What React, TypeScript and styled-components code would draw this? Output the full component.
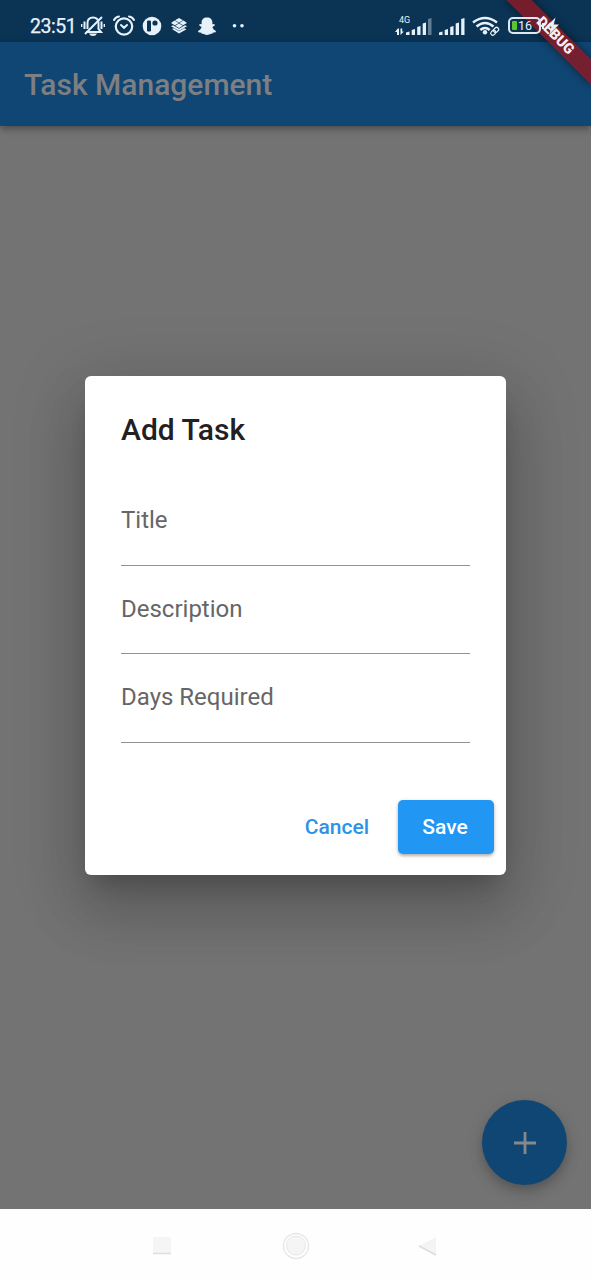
import React from 'react';
import styled, { createGlobalStyle } from 'styled-components';

const GlobalStyle = createGlobalStyle`
  * { box-sizing: border-box; }
  html, body { margin: 0; padding: 0; }
  body { font-family: Roboto, "Liberation Sans", sans-serif; overflow: hidden; }
  button, input { font-family: inherit; }
`;

const Screen = styled.div`
  position: relative;
  width: 591px;
  height: 1280px;
  display: flex;
  flex-direction: column;
  overflow: hidden;
  background: #737373;
`;

const StatusBar = styled.header`
  height: 42px;
  flex: none;
  display: flex;
  align-items: flex-start;
  padding: 11px 0 0 30px;
  background: #0b3354;
  color: #e6f1fa;
`;

const Clock = styled.time`
  width: 51px;
  font-size: 19.5px;
  line-height: 31px;
  letter-spacing: -0.45px;
  margin-right: -1px;
  white-space: nowrap;
  -webkit-text-stroke: 0.25px currentColor;
`;

const StatusIcon = styled.svg<{ $gap?: number }>`
  position: relative;
  z-index: 3;
  flex: none;
  height: 30px;
  margin-left: ${({ $gap = 0 }) => $gap}px;
  fill: #e6f1fa;
`;

const Network = styled.div`
  position: relative;
  z-index: 3;
  display: flex;
  flex: none;
  width: 38px;
  margin: 1px 0 0 148px;
`;

const NetworkType = styled.span`
  position: absolute;
  left: 4px;
  top: 4px;
  font-size: 9px;
  line-height: 9px;
`;

const Battery = styled.div`
  position: relative;
  z-index: 3;
  flex: none;
  display: flex;
  align-items: center;
  width: 33px;
  height: 17px;
  margin: 6px 0 0 8px;
  padding-left: 2px;
  border: 2px solid #dfe8ef;
  border-radius: 5px;
  font-size: 12.5px;
  line-height: 13px;
`;

const BatteryLevel = styled.span`
  width: 5px;
  height: 9px;
  margin-right: 1px;
  border-radius: 1px;
  background: #5dc52e;
`;

const AppBar = styled.div`
  height: 84px;
  flex: none;
  display: flex;
  align-items: center;
  padding: 1px 24px 0;
  background: #104673;
  box-shadow: 0 3px 6px -1px rgba(0, 0, 0, 0.2), 0 6px 7px rgba(0, 0, 0, 0.08), 0 1px 8px rgba(0, 0, 0, 0.12);
`;

const AppTitle = styled.h1`
  margin: 0;
  color: #7d7f82;
  font-size: 30px;
  line-height: 36px;
  font-weight: 500;
  letter-spacing: 0;
`;

const Content = styled.main`
  flex: 1;
  display: flex;
  flex-direction: column;
  align-items: center;
  padding-top: 250px;
`;

const Dialog = styled.section`
  width: 421px;
  height: 499px;
  flex: none;
  display: flex;
  flex-direction: column;
  padding: 36px 12px 21px 36px;
  border-radius: 6px;
  background: #fff;
  box-shadow: 0 16px 22px -10px rgba(0, 0, 0, 0.2), 0 36px 57px 4px rgba(0, 0, 0, 0.14),
    0 14px 69px 12px rgba(0, 0, 0, 0.12);
`;

const DialogTitle = styled.h2`
  margin: 0 0 29px;
  color: #212121;
  font-size: 30px;
  line-height: 36px;
  font-weight: 500;
  letter-spacing: 0;
`;

const Field = styled.label`
  display: block;
  width: 349px;
  height: 88.6px;
  padding-top: 28px;
  border-bottom: 1.5px solid #929292;
  color: #666;
  font-size: 24px;
  line-height: 30px;
`;

const Actions = styled.footer`
  display: flex;
  justify-content: flex-end;
  align-items: center;
  gap: 16px;
  margin-top: auto;
`;

const Button = styled.button<{ $raised?: boolean }>`
  height: 54px;
  width: ${({ $raised }) => ($raised ? '96px' : 'auto')};
  padding: 0 13px 0 11px;
  border: 0;
  border-radius: 5px;
  color: ${({ $raised }) => ($raised ? '#fff' : '#2b94e8')};
  background: ${({ $raised }) => ($raised ? '#2196f3' : 'transparent')};
  box-shadow: ${({ $raised }) => ($raised ? '0 2px 3px rgba(0,0,0,.24), 0 1px 5px rgba(0,0,0,.12)' : 'none')};
  font-size: 21px;
  font-weight: 500;
`;

const AddButton = styled.button`
  display: flex;
  align-items: center;
  justify-content: center;
  width: 85px;
  height: 85px;
  flex: none;
  align-self: flex-end;
  margin: auto 24px 24px 0;
  padding: 0;
  border: 0;
  border-radius: 50%;
  background: #104673;
  box-shadow: 0 5px 8px -1px rgba(0, 0, 0, 0.15), 0 9px 15px rgba(0, 0, 0, 0.09), 0 2px 20px rgba(0, 0, 0, 0.07);
`;

const SystemNav = styled.nav`
  height: 71px;
  flex: none;
  display: flex;
  align-items: center;
  justify-content: space-between;
  padding: 3px 152px 0 150px;
  background: #fefefe;
`;

const DebugBanner = styled.div`
  position: absolute;
  z-index: 2;
  left: 495px;
  top: 27px;
  width: 120px;
  height: 18px;
  transform: rotate(45deg);
  background: rgba(130, 27, 41, 0.9);
  box-shadow: 0 0 8px rgba(0, 0, 0, 0.5);
  color: #f4eef0;
  text-align: center;
  font-size: 14.5px;
  line-height: 18px;
  font-weight: 900;
`;

const MutedBell = () => (
  <StatusIcon width="26" viewBox="0 0 26 30">
    <g fill="none" stroke="#e6f1fa" strokeWidth="2">
      <path d="M7.5 18V12C7.5 8 9.5 6.5 13 6.5C17 6.5 18.5 8 18.5 12V18L21 21H6" />
      <path d="M5 23L22 6M4.5 10.5V18M21.5 10.5V18" />
      <path d="M1.7 13V16M24.3 13V16" strokeWidth="1.4" />
    </g>
    <path d="M9 22.5H17Q16 25 13 25T9 22.5Z" />
  </StatusIcon>
);

const AlarmClock = () => (
  <StatusIcon $gap={6} width="24" viewBox="0 0 24 30">
    <g fill="none" stroke="#e6f1fa" strokeLinecap="round">
      <circle cx="12" cy="15.5" r="8.2" strokeWidth="2.2" />
      <path d="M2 9Q3.5 6 7 5.5M22 9Q20.5 6 17 5.5" strokeWidth="2" />
      <path d="M9 14L12 16.8L15 14" strokeWidth="2" />
    </g>
  </StatusIcon>
);

const RoundApp = () => (
  <StatusIcon $gap={6} width="20" viewBox="0 0 20 30">
    <circle cx="10" cy="15" r="9.3" />
    <rect x="5" y="9.5" width="4" height="11" rx="1.2" fill="#0b3354" />
    <circle cx="13" cy="12" r="2.6" fill="#0b3354" />
  </StatusIcon>
);

const LayersApp = () => (
  <StatusIcon $gap={8} width="18" viewBox="0 0 18 30">
    <path d="M9 7L13 9.2L9 11.5L5 9.2ZM4.5 9.6L8.8 12L4.8 14.3L1 12ZM13.5 9.6L17 12L13 14.3L9.3 12ZM9 12.6L12.8 14.8L9 17L5.2 14.8ZM1 15.2L3 14.2L9 17.8L15 14.2L17 15.2L9 19.7ZM2 18L3.8 17.3L9 20.2L14.2 17.3L16.5 18.2L9 22.5Z" />
  </StatusIcon>
);

const GhostApp = () => (
  <StatusIcon $gap={9} width="20" viewBox="0 0 20 30">
    <path d="M10 6.5C6.4 6.5 4.6 8.6 4.6 11.5V13.3L2.6 13L2.2 14.5L4.6 16C4 18 2.8 19.1 1 20L1.4 21.3L4.2 21.8L4.8 22.8C7 22.3 8 24 10 24S13 22.3 15.2 22.8L15.8 21.8L18.6 21.3L19 20C17.2 19.1 16 18 15.4 16L17.8 14.5L17.4 13L15.4 13.3V11.5C15.4 8.6 13.6 6.5 10 6.5Z" />
  </StatusIcon>
);

const Bars = () => (
  <path d="M0 20.5L3.5 19.5V23H0ZM5.7 18L9 17V23H5.7ZM11.2 15L14.5 14V23H11.2ZM16.7 11.5L20 10.5V23H16.7Z" />
);

const App = () => (
  <Screen>
    <GlobalStyle />
    <StatusBar>
      <Clock>23:51</Clock>
      <MutedBell />
      <AlarmClock />
      <RoundApp />
      <LayersApp />
      <GhostApp />
      <StatusIcon $gap={14} width="16" viewBox="0 0 16 30">
        <circle cx="3.5" cy="14.7" r="1.8" />
        <circle cx="11" cy="14.7" r="1.8" />
      </StatusIcon>
      <Network>
        <NetworkType>4G</NetworkType>
        <StatusIcon width="38" viewBox="0 0 38 30">
          <path d="M2.8 16.5L0 20H2V23H4V16.5ZM5.5 16.5V23L8.8 19.5H7.2V16.5Z" />
          <g transform="translate(11 0)"><Bars /></g>
          <path d="M33 7L36.5 6V23H33Z" opacity=".4" />
        </StatusIcon>
      </Network>
      <StatusIcon $gap={6} width="28" viewBox="0 -1 28 30">
        <Bars />
        <path d="M22.2 7L25.5 6V23H22.2Z" />
      </StatusIcon>
      <StatusIcon $gap={5} width="28" viewBox="0 0 28 30">
        <g fill="none" stroke="#e6f1fa" strokeWidth="2.6">
          <path d="M1 11.5Q13 2.5 25 11.5" />
          <path d="M4.5 15.5Q13 8.5 21.5 15.5" />
          <path d="M8.3 19Q13 15 17.7 19" />
        </g>
        <circle cx="13" cy="21.3" r="2.2" />
        <g fill="none" stroke="#e6f1fa" strokeWidth="1.2" transform="rotate(-45 22.5 20.5)">
          <rect x="18" y="18.5" width="5.5" height="4" rx="2" />
          <rect x="22" y="18.5" width="5.5" height="4" rx="2" />
        </g>
      </StatusIcon>
      <Battery><BatteryLevel />16</Battery>
      <StatusIcon width="20" viewBox="0 0 20 30">
        <path d="M1 12H3V18H1ZM14.5 6.5L5.5 15.5H10.5L8.5 23L18 13.5H12.7Z" />
      </StatusIcon>
    </StatusBar>
    <AppBar><AppTitle>Task Management</AppTitle></AppBar>
    <Content>
      <Dialog role="dialog" aria-label="Add Task">
        <DialogTitle>Add Task</DialogTitle>
        <Field>Title</Field>
        <Field>Description</Field>
        <Field>Days Required</Field>
        <Actions>
          <Button>Cancel</Button>
          <Button $raised>Save</Button>
        </Actions>
      </Dialog>
      <AddButton aria-label="Add">
        <svg width="22" height="22" viewBox="0 0 22 22" fill="none" stroke="#85898b" strokeWidth="2.8">
          <path d="M11 0V22M0 11H22" />
        </svg>
      </AddButton>
    </Content>
    <SystemNav>
      <svg width="24" height="28" viewBox="0 0 24 28">
        <rect x="3" y="5" width="18" height="17" fill="#f5f5f5" />
        <path d="M3 21.5H21" stroke="#dedede" strokeWidth="1.5" />
      </svg>
      <svg width="30" height="30" viewBox="0 0 30 30">
        <circle cx="15" cy="15" r="12.5" fill="none" stroke="#e7e7e7" strokeWidth="1.4" />
        <circle cx="15" cy="14.5" r="9.5" fill="#f5f5f5" stroke="#e7e7e7" />
      </svg>
      <svg width="22" height="28" viewBox="0 0 22 28">
        <path d="M19 5V23L2 14Z" fill="#f4f4f4" />
        <path d="M2 14L19 23" stroke="#dddddd" strokeWidth="1.5" />
      </svg>
    </SystemNav>
    <DebugBanner>DEBUG</DebugBanner>
  </Screen>
);

export default App;
